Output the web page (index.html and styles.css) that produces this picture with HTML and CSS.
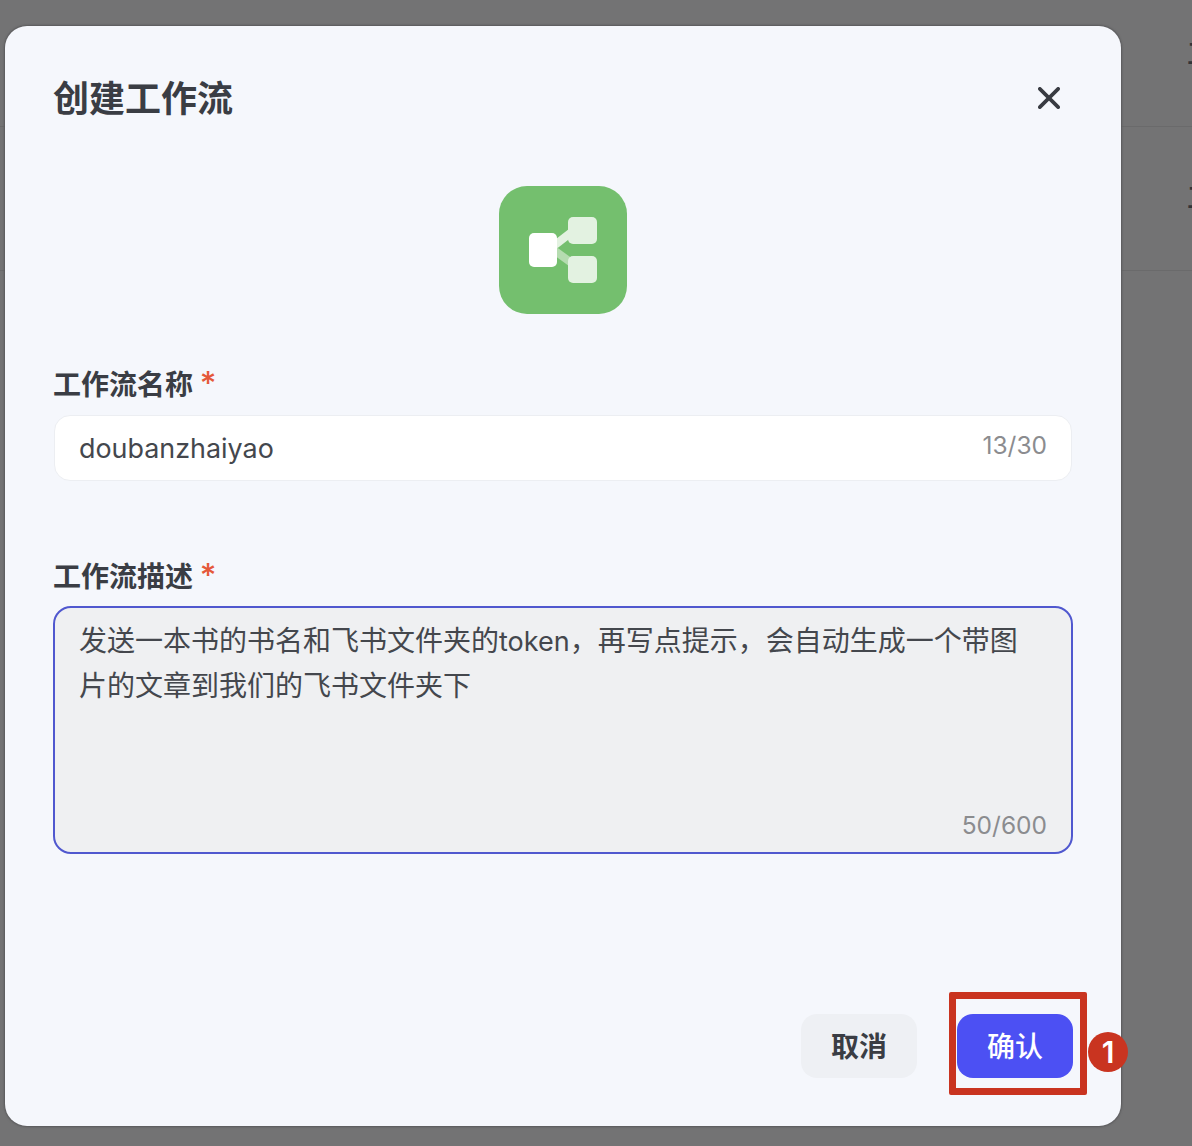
FILE: index.html
```html
<!DOCTYPE html>
<html lang="zh-CN">
<head>
<meta charset="utf-8">
<title>创建工作流</title>
<link rel="stylesheet" href="styles.css">
</head>
<body>

<div class="bg-list">
  <div class="bg-row"><span>工</span></div>
  <div class="bg-row"><span>工</span></div>
</div>

<div class="dialog">
  <div class="dialog-header">
    <h1>创建工作流</h1>
    <svg class="close-icon" viewBox="0 0 24 24" aria-label="关闭">
      <path d="M2 2 22 22M22 2 2 22"/>
    </svg>
  </div>

  <div class="app-icon">
    <svg viewBox="0 0 128 128">
      <rect width="128" height="128" rx="28" fill="#74bf6e"/>
      <path d="M52 62 74 45" stroke="#e3f2e1" stroke-width="8"/>
      <path d="M52 62 74 78" stroke="#b5dcb0" stroke-width="8"/>
      <rect x="69" y="31" width="29" height="27" rx="5" fill="#e3f2e1"/>
      <rect x="69" y="70" width="29" height="27" rx="5" fill="#e3f2e1"/>
      <rect x="30" y="47" width="28" height="34" rx="5" fill="#fff"/>
    </svg>
  </div>

  <div class="field-label first">工作流名称 <em>*</em></div>
  <div class="text-input">
    doubanzhaiyao
    <span class="counter">13/30</span>
  </div>

  <div class="field-label second">工作流描述 <em>*</em></div>
  <div class="text-area">
    发送一本书的书名和飞书文件夹的<span class="latin">token</span>，再写点提示，会自动生成一个带图片的文章到我们的飞书文件夹下
    <span class="counter">50/600</span>
  </div>

  <div class="dialog-footer">
    <button class="btn btn-cancel">取消</button>
    <div class="confirm-wrap">
      <button class="btn btn-confirm">确认</button>
      <div class="mark-box"></div>
      <div class="mark-num">1</div>
    </div>
  </div>
</div>

</body>
</html>
```

FILE: styles.css
```css
html, body {
  margin:0;
  height:100%;
}

body {
  position:relative;
  box-sizing:border-box;
  width:1192px;
  height:1146px;
  padding:26px 71px 20px 5px;
  overflow:hidden;
  background:#737374;
  font-family:"Inter", "Noto Sans CJK SC", sans-serif;
  color:#3a3d44;
}

/* page behind the overlay */
.bg-list {
  position:absolute;
  top:-17px;
  left:0;
  right:0;
}

.bg-row {
  height:143px;
  border-bottom:1px solid #6a6a6b;
  text-align:right;
  line-height:143px;
  font-size:28px;
  font-weight:500;
  color:#333438;
}

.bg-row span {
  margin-right:-23px;
}

.dialog {
  position:relative;
  display:flex;
  flex-direction:column;
  box-sizing:border-box;
  height:1100px;
  padding:48px;
  border-radius:22px;
  background:#f5f7fc;
  box-shadow:0 0 2px 1px #59595b;
}

.dialog-header {
  display:flex;
  align-items:center;
  justify-content:space-between;
  height:48px;
  padding:0 13px 0 0;
}

.dialog-header h1 {
  margin:0;
  position:relative;
  top:1px;
  font-size:36px;
  font-weight:700;
  line-height:48px;
}

.close-icon {
  width:22px;
  height:22px;
  fill:none;
  stroke:#383b42;
  stroke-width:4;
  stroke-linecap:round;
}

.app-icon {
  align-self:center;
  width:128px;
  height:128px;
  margin-top:64px;
}

.app-icon svg {
  display:block;
  width:128px;
  height:128px;
}

.field-label {
  height:40px;
  font-size:28px;
  font-weight:700;
  line-height:40px;
}

.field-label em {
  font-style:normal;
  font-size:32px;
  font-weight:500;
  color:#e5583a;
}

.field-label.first {
  margin-top:50px;
  margin-bottom:11px;
}

.field-label.second {
  margin-top:75px;
  margin-bottom:10px;
}

.text-input {
  position:relative;
  box-sizing:border-box;
  height:66px;
  margin:0 1px;
  padding:0 24px;
  border:1px solid #eceef2;
  border-radius:16px;
  background:#fff;
  font-size:26.9px;
  line-height:65px;
  color:#44474d;
}

.text-area {
  position:relative;
  box-sizing:border-box;
  height:248px;
  padding:11px 40px 0 24px;
  border:2px solid #5058cf;
  border-radius:18px;
  background:#eff0f2;
  font-size:28px;
  line-height:44px;
  color:#44474d;
}

.text-area .latin {
  font-size:27px;
}

.counter {
  position:absolute;
  right:24px;
  font-size:24.5px;
  line-height:30px;
  color:#8b8c8f;
}

.text-input .counter {
  top:14px;
}

.text-area .counter {
  bottom:12px;
}

.dialog-footer {
  display:flex;
  justify-content:flex-end;
  gap:40px;
  margin-top:auto;
}

.btn {
  display:block;
  width:116px;
  height:64px;
  padding:0 0 2px;
  border:0;
  border-radius:16px;
  font-family:inherit;
  font-size:28px;
  font-weight:700;
}

.btn-cancel {
  background:#eef0f4;
  color:#3a3d44;
}

.btn-confirm {
  background:#4c50f3;
  color:#fff;
  font-weight:500;
}

.confirm-wrap {
  position:relative;
}

/* red annotation drawn over the screenshot */
.mark-box {
  position:absolute;
  top:-22px;
  left:-8px;
  width:124px;
  height:89px;
  border:7px solid #c93420;
  border-radius:2px;
}

.mark-num {
  position:absolute;
  top:18px;
  left:131px;
  width:40px;
  height:40px;
  border-radius:50%;
  background:#c93420;
  color:#fff;
  font-size:30px;
  font-weight:600;
  line-height:40px;
  text-align:center;
}
```
